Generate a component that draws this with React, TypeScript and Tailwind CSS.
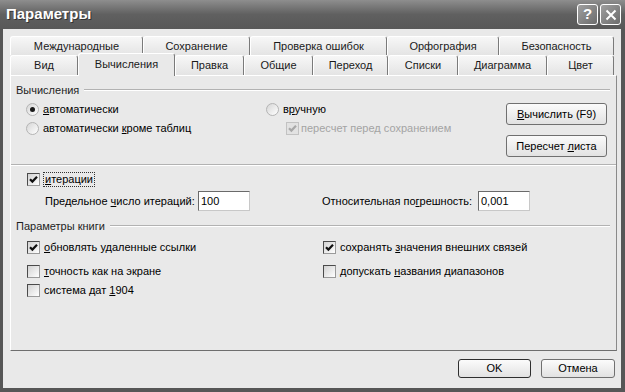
import { ReactNode } from "react";
import clsx from "clsx";

const backRow = [
  { label: "Международные", w: "w-[133px]" },
  { label: "Сохранение", w: "w-[107px]" },
  { label: "Проверка ошибок", w: "w-[137px]" },
  { label: "Орфография", w: "w-[112px]" },
  { label: "Безопасность", w: "w-[115px]" },
];

const frontRow = [
  { label: "Вид", w: "w-[68px]" },
  { label: "Вычисления", w: "w-[97px]", active: true },
  { label: "Правка", w: "w-[69px]" },
  { label: "Общие", w: "w-[69px]" },
  { label: "Переход", w: "w-[75px]" },
  { label: "Списки", w: "w-[70px]" },
  { label: "Диаграмма", w: "w-[89px]" },
  { label: "Цвет", w: "w-[67px]" },
];

function Tab({ label, w, active }: { label: string; w: string; active?: boolean }) {
  return (
    <div
      className={clsx(
        "flex items-center justify-center rounded-t-[3px] border-t border-l border-r border-t-white border-l-white border-r-[#7a7a7a]",
        w,
        active
          ? "relative z-10 -mt-[2px] -mb-[1px] h-[23px] bg-[#e9e9e9] pb-[2px]"
          : "h-full bg-linear-to-b from-[#f7f7f7] to-[#e4e4e4]"
      )}
    >
      {label}
    </div>
  );
}

function Radio({ checked }: { checked?: boolean }) {
  return (
    <span className="flex h-[13px] w-[13px] shrink-0 items-center justify-center rounded-full border border-[#b4b4b4] bg-linear-to-br from-[#d6d6d6] to-white">
      {checked && <span className="h-[5px] w-[5px] rounded-full bg-[#1a1a1a]" />}
    </span>
  );
}

function Check({ checked, disabled }: { checked?: boolean; disabled?: boolean }) {
  return (
    <span
      className={clsx(
        "flex h-[13px] w-[13px] shrink-0 items-center justify-center border",
        disabled
          ? "border-[#c2c2c2] bg-[#e2e2e2]"
          : "border-t-[#4a4a4a] border-l-[#4a4a4a] border-r-[#9a9a9a] border-b-[#9a9a9a] bg-linear-to-br from-[#d2d2d2] to-white"
      )}
    >
      {checked && (
        <svg viewBox="0 0 9 9" className="h-[9px] w-[9px]">
          <path
            d="M1 4.2 L3.4 6.6 L8 1.8"
            stroke={disabled ? "#a8a8a8" : "#111"}
            strokeWidth="2.2"
            fill="none"
          />
        </svg>
      )}
    </span>
  );
}

function Button({ children, w, def }: { children: ReactNode; w: string; def?: boolean }) {
  return (
    <div
      className={clsx(
        "flex items-center justify-center rounded-[3px] border bg-linear-to-b from-[#fbfbfb] to-[#e2e2e2]",
        w,
        def ? "border-[#2e2e2e]" : "border-[#707070]"
      )}
    >
      {children}
    </div>
  );
}

function GroupHeader({ title }: { title: string }) {
  return (
    <div className="flex h-[14px] items-center gap-[5px] pl-[5px] pr-[6px] text-[#1e1e1e]">
      <span>{title}</span>
      <span className="h-[2px] flex-1 border-t border-b border-t-[#b2b2b2] border-b-white" />
    </div>
  );
}

function Field({ value }: { value: string }) {
  return (
    <div className="flex h-[20px] w-[52px] items-center border border-t-[#6a6a6a] border-l-[#6a6a6a] border-r-[#c8c8c8] border-b-[#c8c8c8] bg-white pl-[2px]">
      {value}
    </div>
  );
}

export default function App() {
  return (
    <div className="flex h-[392px] w-[625px] flex-col bg-[#565656] pb-[4px] pl-[3px] pr-[4px] font-['Liberation_Sans',Arial,sans-serif] text-[11px] text-black">
      {/* title bar */}
      <div className="-ml-[3px] -mr-[4px] flex h-[29px] shrink-0 items-center justify-between bg-linear-to-b from-[#8e8e8e] via-[#606060] to-[#585858] pl-[6px] pr-[4px]">
        <span className="text-[15px] font-bold text-white [text-shadow:1px_1px_0_#333]">Параметры</span>
        <div className="flex gap-[2px]">
          <div className="flex h-[21px] w-[21px] items-center justify-center rounded-[3px] border border-white bg-linear-to-br from-[#a0a0a0] to-[#6c6c6c] text-[15px] font-bold text-white">
            ?
          </div>
          <div className="flex h-[21px] w-[21px] items-center justify-center rounded-[3px] border border-white bg-linear-to-br from-[#a0a0a0] to-[#6c6c6c]">
            <svg viewBox="0 0 12 12" className="h-[12px] w-[12px]">
              <path d="M1.5 1.5 L10.5 10.5 M10.5 1.5 L1.5 10.5" stroke="white" strokeWidth="2" />
            </svg>
          </div>
        </div>
      </div>

      {/* body */}
      <div className="flex flex-1 flex-col bg-[#e9e9e9] pl-[7px] pr-[6px] pt-[7px]">
        <div className="flex h-[19px] w-[604px] text-[#1a1a1a]">
          {backRow.map((t) => (
            <Tab key={t.label} {...t} />
          ))}
        </div>
        <div className="flex h-[20px] w-[604px] items-end text-[#1a1a1a]">
          {frontRow.map((t) => (
            <Tab key={t.label} {...t} />
          ))}
        </div>

        {/* panel */}
        <div className="flex h-[276px] w-[607px] flex-col border border-t-white border-l-white border-r-[#8a8a8a] border-b-[#6e6e6e] bg-[#e9e9e9]">
          <div className="mt-[7px]">
            <GroupHeader title="Вычисления" />
          </div>

          <div className="mt-[3px] flex items-start pl-[15px] pr-[9px]">
            <div className="flex w-[240px] flex-col">
              <div className="flex h-[19px] items-center gap-[4px]">
                <Radio checked />
                <span>
                  <u>а</u>втоматически
                </span>
              </div>
              <div className="flex h-[19px] items-center gap-[4px]">
                <Radio />
                <span>
                  автоматически <u>к</u>роме таблиц
                </span>
              </div>
            </div>
            <div className="flex flex-1 flex-col">
              <div className="flex h-[19px] items-center gap-[4px]">
                <Radio />
                <span>
                  в<u>р</u>учную
                </span>
              </div>
              <div className="flex h-[19px] items-center gap-[2px] pl-[20px] text-[#a4a4a4]">
                <Check checked disabled />
                <span>пересчет перед сохранением</span>
              </div>
            </div>
            <div className="mt-[3px] flex flex-col gap-[10px]">
              <Button w="w-[101px] h-[22px]">
                <span>
                  <u>В</u>ычислить (F9)
                </span>
              </Button>
              <Button w="w-[101px] h-[22px]">
                <span>
                  Пересчет <u>л</u>иста
                </span>
              </Button>
            </div>
          </div>

          <div className="mt-[7px] h-[2px] border-t border-b border-t-[#b2b2b2] border-b-white" />

          <div className="mt-[4px] flex h-[19px] items-center gap-[3px] pl-[16px]">
            <Check checked />
            <span className="border border-dotted border-[#333] px-[1px] leading-[13px]">
              <u>и</u>терации
            </span>
          </div>

          <div className="mt-[2px] flex h-[20px] items-center pl-[34px]">
            <span className="w-[153px]">
              Предельное <u>ч</u>исло итераций:
            </span>
            <Field value="100" />
            <span className="ml-[72px] w-[156px]">
              Относительная по<u>г</u>решность:
            </span>
            <Field value="0,001" />
          </div>

          <div className="mt-[8px]">
            <GroupHeader title="Параметры книги" />
          </div>

          <div className="flex pl-[16px]">
            <div className="flex w-[296px] flex-col">
              <div className="mt-[5px] flex h-[19px] items-center gap-[4px]">
                <Check checked />
                <span>
                  <u>о</u>бновлять удаленные ссылки
                </span>
              </div>
              <div className="mt-[5px] flex h-[19px] items-center gap-[4px]">
                <Check />
                <span>
                  <u>т</u>очность как на экране
                </span>
              </div>
              <div className="flex h-[19px] items-center gap-[4px]">
                <Check />
                <span>
                  система дат <u>1</u>904
                </span>
              </div>
            </div>
            <div className="flex flex-col">
              <div className="mt-[5px] flex h-[19px] items-center gap-[4px]">
                <Check checked />
                <span>
                  сохранять <u>з</u>начения внешних связей
                </span>
              </div>
              <div className="mt-[5px] flex h-[19px] items-center gap-[4px]">
                <Check />
                <span>
                  допускать <u>н</u>азвания диапазонов
                </span>
              </div>
            </div>
          </div>
        </div>

        <div className="mt-[8px] flex justify-end gap-[10px]">
          <Button w="w-[73px] h-[19px]" def>
            OK
          </Button>
          <Button w="w-[74px] h-[19px]">Отмена</Button>
        </div>
      </div>
    </div>
  );
}
